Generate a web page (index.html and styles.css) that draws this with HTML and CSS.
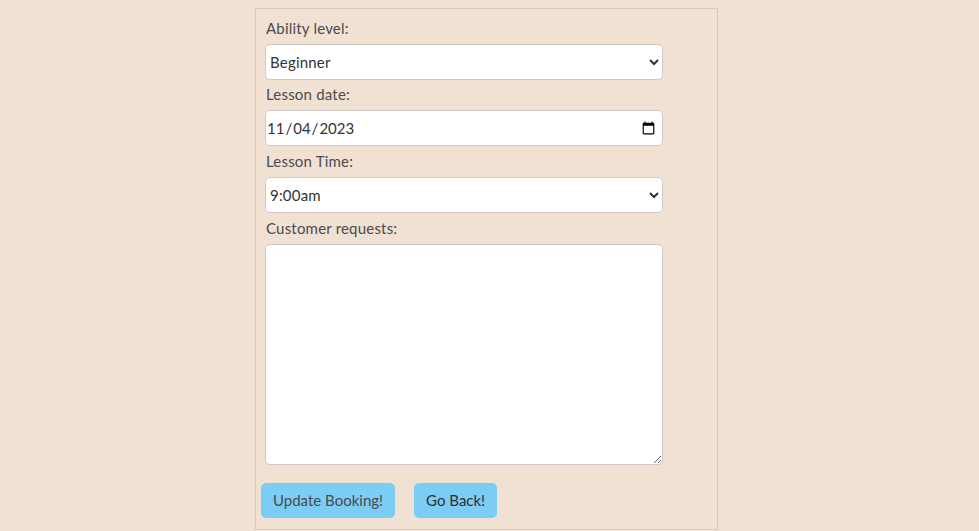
FILE: index.html
```html
<!DOCTYPE html>
<html>
<head>
<meta charset="utf-8">
<link rel="stylesheet" href="styles.css">
</head>
<body>
<form class="card">
  <label class="lbl" for="lvl">Ability level:</label>
  <select id="lvl" class="field sel first"><option>Beginner</option></select>
  <label class="lbl" for="dt">Lesson date:</label>
  <input id="dt" class="field date" type="date" value="2023-11-04">
  <label class="lbl" for="tm">Lesson Time:</label>
  <select id="tm" class="field sel"><option>9:00am</option></select>
  <label class="lbl" for="rq">Customer requests:</label>
  <textarea id="rq" class="field area"></textarea>
  <div class="actions">
    <button type="button" class="btn">Update Booking!</button>
    <button type="button" class="btn dark">Go Back!</button>
  </div>
</form>
</body>
</html>
```
FILE: styles.css
```css
html, body {
  margin: 0;
  background: #f1e1d3;
}
body {
  font-family: Lato, "Open Sans", sans-serif;
  color: #4b4a4f;
}
.card {
  box-sizing: border-box;
  width: 463px;
  height: 522px;
  margin: 8px 0 0 255px;
  border: 1px solid #d6cac0;
  padding: 9px 0 0 9px;
  display: flex;
  flex-direction: column;
  align-items: flex-start;
}
.lbl {
  font-size: 15px;
  line-height: 20px;
  margin: 0 0 6px 1px;
  letter-spacing: 0.2px;
}
.field {
  box-sizing: border-box;
  width: 398px;
  margin: 0 0 5px 0;
  background: #fff;
  border: 1px solid #cfcac6;
  border-radius: 5px;
  font-family: Lato, "Open Sans", sans-serif;
  font-size: 15px;
  color: #333;
}
.field.first {
  margin-bottom: 4px;
}
.sel {
  height: 36px;
  padding: 0;
  letter-spacing: 0.2px;
}
.date {
  height: 36px;
  padding: 0 4px 0 0;
}
.area {
  height: 221px;
  margin-bottom: 18px;
}
.actions {
  display: flex;
  gap: 19px;
  margin-left: -4px;
}
.btn {
  height: 35px;
  background: #7ccdf4;
  border: none;
  border-radius: 5px;
  padding: 0 12px 1px;
  font-family: Lato, "Open Sans", sans-serif;
  font-size: 15px;
  color: #4b4a4f;
  cursor: pointer;
}
.btn.dark {
  color: #2e2e33;
}
```
